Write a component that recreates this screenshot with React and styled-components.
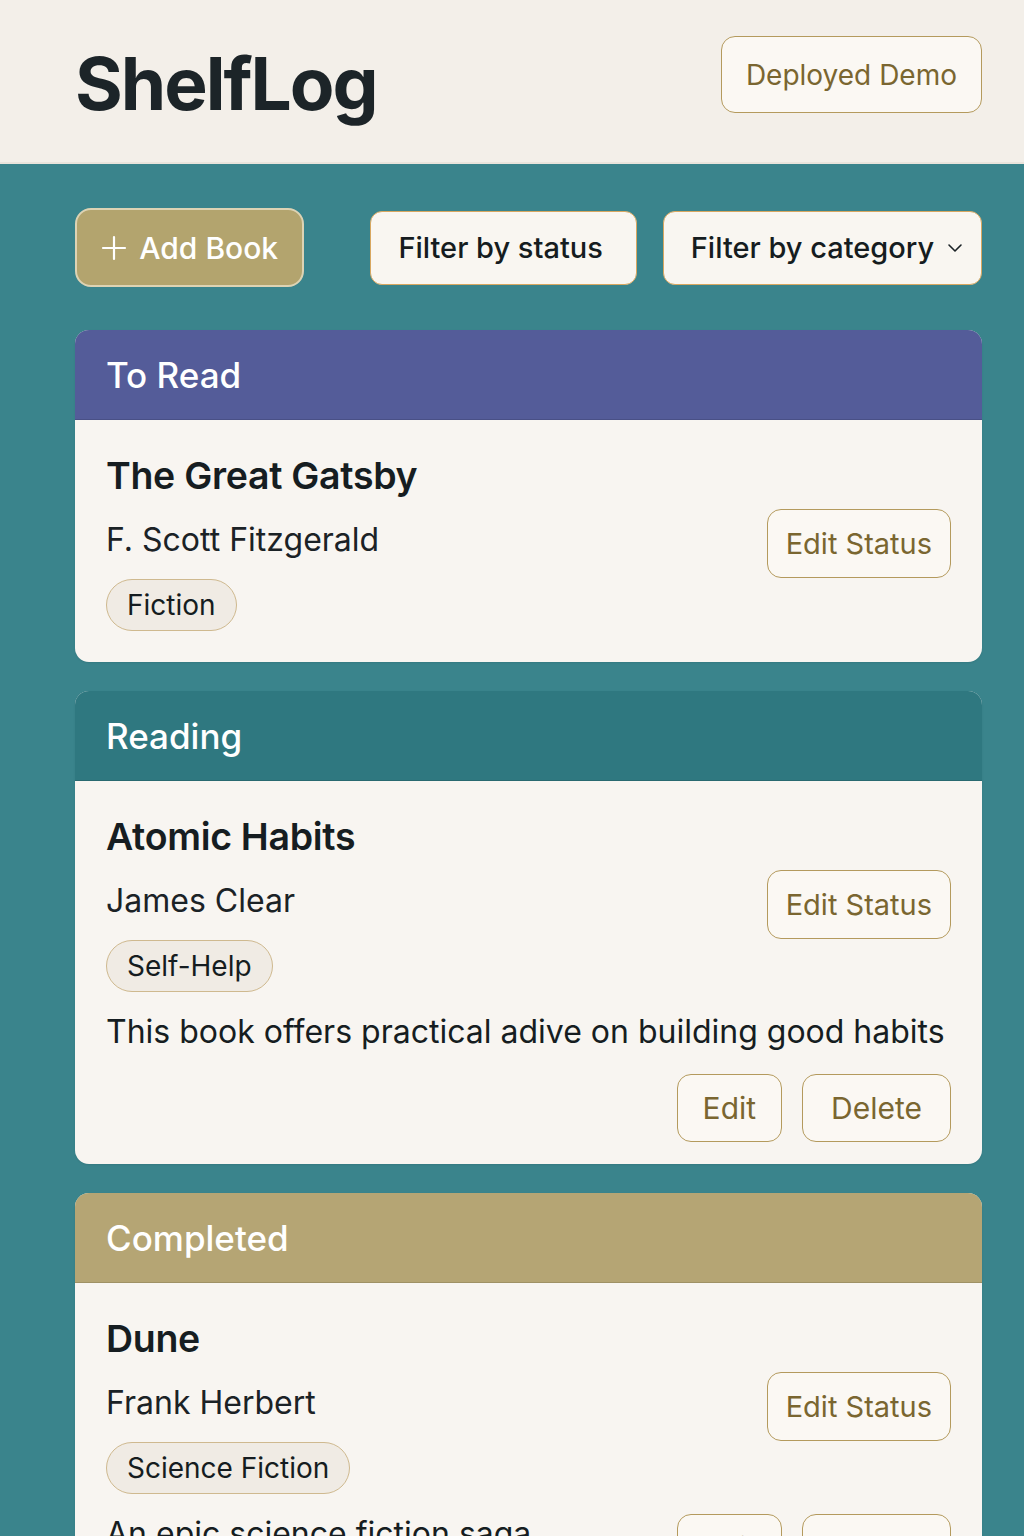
import React from "react";
import styled, { createGlobalStyle } from "styled-components";

const Global = createGlobalStyle`
  html, body { margin: 0; padding: 0; }
  body {
    background: #3a848c;
    font-family: Inter, "Noto Sans", "Liberation Sans", sans-serif;
    color: #1b2226;
  }
  * { box-sizing: border-box; }
`;

const Page = styled.div`
  min-height: 1536px;
  background: #3a848c;
`;

const Header = styled.header`
  height: 164px;
  background: #f3efe9;
  border-bottom: 2px solid #e9e4dc;
  display: flex;
  align-items: flex-start;
  justify-content: space-between;
  padding: 36px 42px 0 75px;
`;

const Logo = styled.h1`
  margin: 11px 0 0;
  font-size: 73px;
  line-height: 1;
  font-weight: 700;
  letter-spacing: -2px;
  color: #1c2428;
`;

const OutlineButton = styled.button`
  font-family: inherit;
  font-size: ${(p) => p.$size || 29}px;
  line-height: 1;
  color: #7a6630;
  background: #fbf8f3;
  border: 1.5px solid #b49a5d;
  border-radius: 14px;
  height: ${(p) => p.$height || 68}px;
  padding: 0 ${(p) => p.$padX || 28}px;
  cursor: pointer;
  white-space: nowrap;
`;

const Main = styled.main`
  padding: 44px 42px 0 75px;
  display: flex;
  flex-direction: column;
  gap: 29px;
`;

const Toolbar = styled.div`
  display: flex;
  align-items: center;
  gap: 26px;
  margin-bottom: 14px;
`;

const AddButton = styled.button`
  font-family: inherit;
  height: 79px;
  width: 230px;
  border-radius: 16px;
  background: #b3a46e;
  border: 2px solid #ddd3b4;
  color: #fff;
  font-size: 30px;
  font-weight: 500;
  display: flex;
  align-items: center;
  justify-content: center;
  gap: 12px;
  margin-right: 40px;
  cursor: pointer;
`;

const FilterButton = styled.button`
  font-family: inherit;
  height: 74px;
  width: ${(p) => p.$width}px;
  border-radius: 12px;
  background: #f9f6f1;
  border: 1.5px solid #d8a760;
  color: #151c20;
  font-size: 29px;
  font-weight: 500;
  display: flex;
  align-items: center;
  justify-content: space-between;
  padding: 0 18px 0 27px;
  cursor: pointer;
`;

const Section = styled.section`
  border-radius: 14px;
  overflow: hidden;
  background: #f8f5f1;
  box-shadow: 0 1px 2px rgba(0, 0, 0, 0.08);
`;

const SectionHeader = styled.div`
  height: 90px;
  background: ${(p) => p.$bg};
  color: #fff;
  font-size: 35px;
  font-weight: 500;
  display: flex;
  align-items: center;
  padding: 0 31px;
  border-bottom: 1px solid rgba(0, 0, 0, 0.12);
`;

const SectionBody = styled.div`
  padding: 35px 31px ${(p) => p.$padBottom || 31}px;
  display: flex;
  flex-direction: column;
  gap: 20px;
`;

const BookTop = styled.div`
  display: flex;
  align-items: center;
  justify-content: space-between;
`;

const BookInfo = styled.div`
  display: flex;
  flex-direction: column;
  align-items: flex-start;
`;

const Title = styled.h2`
  margin: 0;
  font-size: 37.5px;
  line-height: 42px;
  font-weight: 600;
  color: #161d21;
  letter-spacing: -0.3px;
`;

const Author = styled.div`
  margin-top: 23px;
  font-size: 32px;
  line-height: 40px;
  color: #1b2226;
`;

const Tag = styled.span`
  margin-top: 19px;
  height: 52px;
  display: inline-flex;
  align-items: center;
  padding: 0 20px;
  border-radius: 26px;
  background: #f0ebe4;
  border: 1.5px solid #cfb98f;
  font-size: 28px;
  color: #151c20;
`;

const BottomRow = styled.div`
  display: flex;
  flex-wrap: wrap;
  align-items: flex-start;
  row-gap: 22px;
  column-gap: 20px;
`;

const Description = styled.p`
  margin: 0;
  font-size: 32px;
  line-height: 40px;
  color: #161d21;
`;

const Actions = styled.div`
  margin-left: auto;
  display: flex;
  gap: 20px;
`;

const Plus = () => (
  <svg width="26" height="26" viewBox="0 0 26 26" fill="none" stroke="#fff" strokeWidth="2.2" strokeLinecap="round">
    <path d="M13 2v22M2 13h22" />
  </svg>
);

const Chevron = () => (
  <svg width="16" height="10" viewBox="0 0 16 10" fill="none" stroke="#1b2226" strokeWidth="1.6" strokeLinecap="round" strokeLinejoin="round">
    <path d="M2 2l6 6 6-6" />
  </svg>
);

const sections = [
  {
    name: "To Read",
    color: "#545c99",
    book: { title: "The Great Gatsby", author: "F. Scott Fitzgerald", tag: "Fiction" },
  },
  {
    name: "Reading",
    color: "#2f7880",
    pad: 22,
    book: {
      title: "Atomic Habits",
      author: "James Clear",
      tag: "Self-Help",
      desc: "This book offers practical adive on building good habits",
    },
  },
  {
    name: "Completed",
    color: "#b5a574",
    book: {
      title: "Dune",
      author: "Frank Herbert",
      tag: "Science Fiction",
      desc: "An epic science fiction saga",
    },
  },
];

export default function App() {
  return (
    <Page>
      <Global />
      <Header>
        <Logo>ShelfLog</Logo>
        <OutlineButton $height={77} $padX={24} $size={28}>Deployed Demo</OutlineButton>
      </Header>
      <Main>
        <Toolbar>
          <AddButton>
            <Plus />
            Add Book
          </AddButton>
          <FilterButton $width={267}>Filter by status</FilterButton>
          <FilterButton $width={320}>
            Filter by category
            <Chevron />
          </FilterButton>
        </Toolbar>
        {sections.map((s) => (
          <Section key={s.name}>
            <SectionHeader $bg={s.color}>{s.name}</SectionHeader>
            <SectionBody $padBottom={s.pad}>
              <BookTop>
                <BookInfo>
                  <Title>{s.book.title}</Title>
                  <Author>{s.book.author}</Author>
                  <Tag>{s.book.tag}</Tag>
                </BookInfo>
                <OutlineButton $height={69} $padX={18}>Edit Status</OutlineButton>
              </BookTop>
              {s.book.desc && (
                <BottomRow>
                  <Description>{s.book.desc}</Description>
                  <Actions>
                    <OutlineButton $height={68} $padX={25} $size={30}>Edit</OutlineButton>
                    <OutlineButton $height={68} $padX={28} $size={30}>Delete</OutlineButton>
                  </Actions>
                </BottomRow>
              )}
            </SectionBody>
          </Section>
        ))}
      </Main>
    </Page>
  );
}
